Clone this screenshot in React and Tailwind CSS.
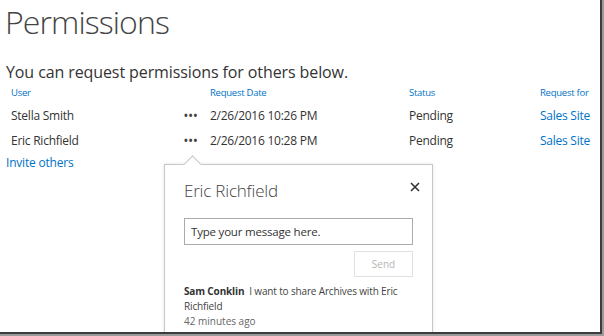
import React from 'react';

const rows = [
  { user: 'Stella Smith', date: '2/26/2016 10:26 PM', status: 'Pending', site: 'Sales Site' },
  { user: 'Eric Richfield', date: '2/26/2016 10:28 PM', status: 'Pending', site: 'Sales Site' },
];

const App = () => {
  return (
    <div className="w-[604px] h-[336px] bg-[#9a9a9a] font-['Open_Sans',sans-serif]">
      <div className="relative w-[602px] h-[334px] bg-white border-r-2 border-b-2 border-[#3c3c3c] overflow-hidden text-[#444]">

        <h1 className="pl-[5px] pt-[2px] text-[32px] leading-[40px] font-light text-[#444] tracking-[-0.9px]">
          Permissions
        </h1>

        <p className="pl-[6px] mt-[19px] text-[16px] leading-[22px] text-[#333] tracking-[-0.1px]">
          You can request permissions for others below.
        </p>

        {/* table */}
        <div className="pl-[11px] mt-[3px] text-[12px] tracking-[-0.25px]">
          <div className="grid grid-cols-[173px_26px_199px_131px_1fr] text-[9.5px] leading-[14px] text-[#0072c6]">
            <span>User</span>
            <span></span>
            <span>Request Date</span>
            <span>Status</span>
            <span>Request for</span>
          </div>

          {rows.map((r, i) => (
            <div
              key={r.user}
              className={`grid grid-cols-[173px_26px_199px_131px_1fr] h-[25px] items-center ${i === 0 ? 'mt-[3px]' : ''}`}
            >
              <span className="text-[#333]">{r.user}</span>
              <span className="text-[#444] font-bold tracking-[1px] text-[10px]">•••</span>
              <span className="text-[#333]">{r.date}</span>
              <span className="text-[#333]">{r.status}</span>
              <span className="text-[#0072c6]">{r.site}</span>
            </div>
          ))}
        </div>

        <a className="block pl-[6px] mt-[1px] text-[12px] leading-[18px] text-[#0072c6] tracking-[-0.2px]">Invite others</a>

        {/* callout */}
        <div className="absolute left-[164px] top-[164px] w-[269px] h-[190px] bg-white border border-[#c8c8c8] shadow-[0_0_3px_rgba(0,0,0,0.12)]">
          <div className="absolute left-[21px] top-[-7px] w-[13px] h-[13px] rotate-45 bg-white border-l border-t border-[#c8c8c8]"></div>

          <div className="relative px-[19px] pt-[14px]">
            <div className="flex items-start justify-between">
              <h2 className="text-[17px] leading-[24px] font-light text-[#444] tracking-[-0.2px]">Eric Richfield</h2>
              <button className="mt-[3px] mr-[-7px] text-[#333]">
                <svg width="10" height="10" viewBox="0 0 10 10">
                  <path d="M1 1L9 9M9 1L1 9" stroke="#333" strokeWidth="1.6" />
                </svg>
              </button>
            </div>

            <input
              className="mt-[15px] w-[229px] h-[27px] px-[6px] border border-[#ababab] text-[11.5px] tracking-[-0.2px] text-[#333] placeholder-[#333] outline-none"
              placeholder="Type your message here."
            />

            <div className="flex justify-end w-[229px] mt-[6px]">
              <button className="w-[59px] h-[26px] border border-[#e1e1e1] text-[10px] text-[#b5b5b5]">
                Send
              </button>
            </div>

            <p className="mt-[7px] w-[232px] text-[10px] leading-[15px] text-[#444] tracking-[-0.15px]">
              <span className="font-bold text-[#333]">Sam Conklin</span>
              {'\u00a0 '}I want to share Archives with Eric Richfield
            </p>
            <p className="text-[10px] leading-[15px] text-[#666]">42 minutes ago</p>
          </div>
        </div>

      </div>
    </div>
  );
};

export default App;
